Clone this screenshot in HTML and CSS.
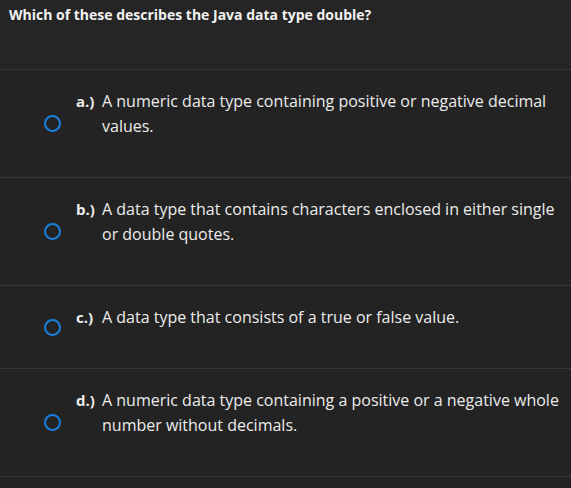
FILE: index.html
```html
<!DOCTYPE html>
<html>
<head>
<meta charset="utf-8">
<link rel="stylesheet" href="styles.css">
</head>
<body>
<div class="quiz">
  <div class="question">Which of these describes the Java data type double?</div>
  <div class="options">
    <div class="option">
      <div class="radio-col"><span class="radio"></span></div>
      <div class="label">a.)</div>
      <div class="text">A numeric data type containing positive or negative decimal values.</div>
    </div>
    <div class="option">
      <div class="radio-col"><span class="radio"></span></div>
      <div class="label">b.)</div>
      <div class="text">A data type that contains characters enclosed in either single or double quotes.</div>
    </div>
    <div class="option">
      <div class="radio-col"><span class="radio"></span></div>
      <div class="label">c.)</div>
      <div class="text">A data type that consists of a true or false value.</div>
    </div>
    <div class="option">
      <div class="radio-col"><span class="radio"></span></div>
      <div class="label">d.)</div>
      <div class="text">A numeric data type containing a positive or a negative whole number without decimals.</div>
    </div>
  </div>
</div>
</body>
</html>
```
FILE: styles.css
```css
html, body {
  margin: 0;
  padding: 0;
  background: #232323;
}
body {
  width: 571px;
  height: 488px;
  overflow: hidden;
  font-family: "Open Sans", "Liberation Sans", sans-serif;
  color: #ececec;
}
.question {
  height: 70px;
  box-sizing: border-box;
  padding: 4px 9px 0;
  font-size: 14px;
  font-weight: 700;
  line-height: 22px;
  background: #252525;
  border-bottom: 1px solid #363636;
  color: #f2f2f2;
}
.option {
  display: flex;
  align-items: stretch;
  border-bottom: 1px solid #363636;
}
.radio-col {
  width: 76px;
  display: flex;
  align-items: center;
  padding-left: 44px;
  box-sizing: border-box;
}
.radio {
  width: 17px;
  height: 17px;
  box-sizing: border-box;
  border: 2px solid #1a80e0;
  border-radius: 50%;
}
.label {
  width: 26px;
  font-weight: 700;
  font-size: 15px;
  line-height: 25px;
  padding: 19px 0 38px;
}
.text {
  flex: 1;
  font-size: 16px;
  line-height: 25px;
  padding: 19px 6px 38px 0;
}
```
